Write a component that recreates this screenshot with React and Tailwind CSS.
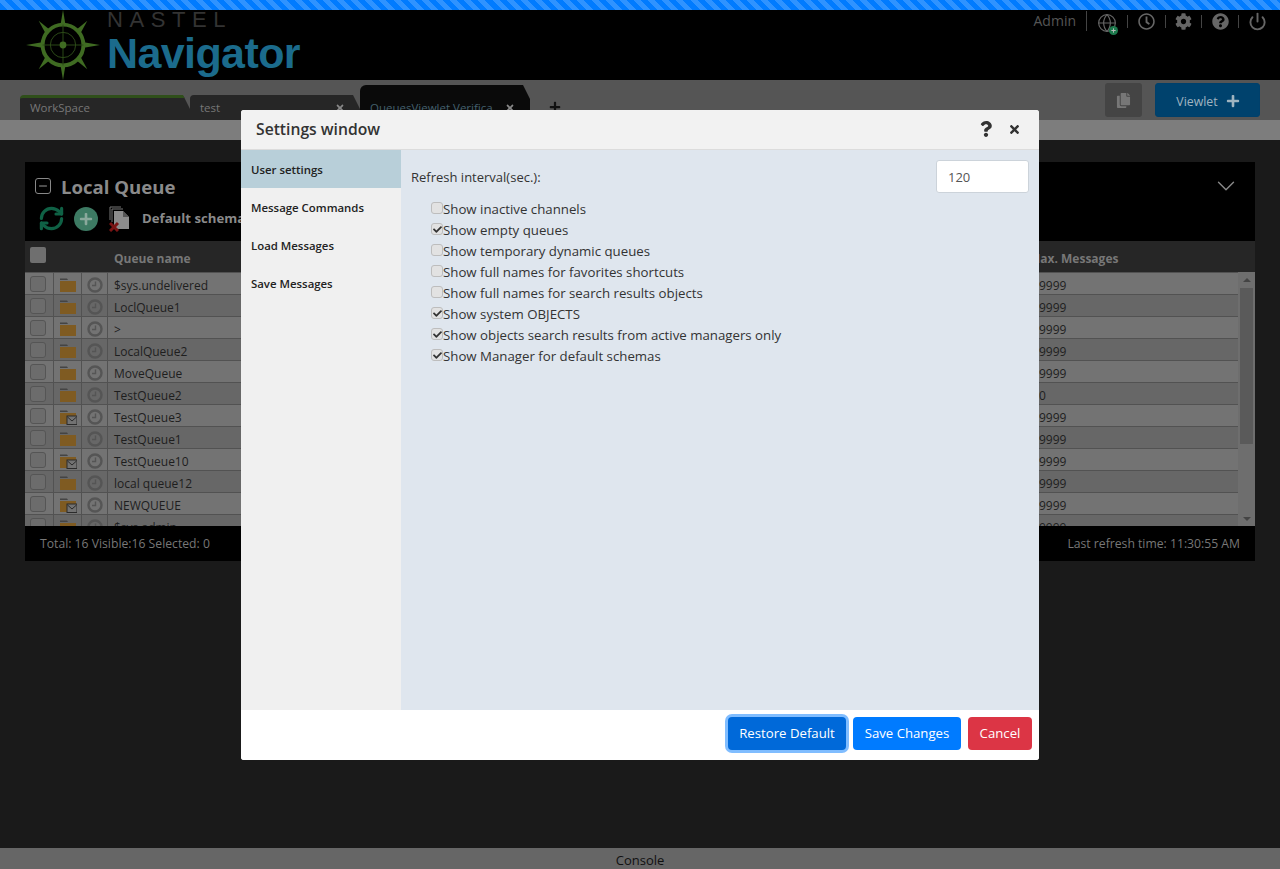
import { Globe, Power, RefreshCw, ChevronDown, Minus } from "lucide-react";
import { FaCheck, FaCog, FaCopy, FaPlus, FaQuestion, FaQuestionCircle, FaRegClock, FaTimes } from "react-icons/fa";

const font = "font-['Open_Sans',sans-serif]";

const queues = [
  ["$sys.undelivered", false, "9999"],
  ["LoclQueue1", false, "9999"],
  [">", false, "9999"],
  ["LocalQueue2", false, "9999"],
  ["MoveQueue", false, "9999"],
  ["TestQueue2", false, "0"],
  ["TestQueue3", true, "9999"],
  ["TestQueue1", false, "9999"],
  ["TestQueue10", true, "9999"],
  ["local queue12", false, "9999"],
  ["NEWQUEUE", true, "9999"],
  ["$sys.admin", false, "9999"],
];

const settings = [
  ["Show inactive channels", false],
  ["Show empty queues", true],
  ["Show temporary dynamic queues", false],
  ["Show full names for favorites shortcuts", false],
  ["Show full names for search results objects", false],
  ["Show system OBJECTS", true],
  ["Show objects search results from active managers only", true],
  ["Show Manager for default schemas", true],
];

const menu = ["User settings", "Message Commands", "Load Messages", "Save Messages"];

function Compass() {
  return (
    <svg width="76" height="70" viewBox="0 0 76 72" className="shrink-0">
      <g fill="#3f6b22">
        <polygon points="38,0 42,24 38,36 34,24" />
        <polygon points="38,72 42,48 38,36 34,48" />
        <polygon points="0,36 24,32 38,36 24,40" />
        <polygon points="76,36 52,32 38,36 52,40" />
        <polygon points="13,11 24,20 20,24" />
        <polygon points="63,11 52,20 56,24" />
        <polygon points="13,61 24,52 20,48" />
        <polygon points="63,61 52,52 56,48" />
      </g>
      <circle cx="38" cy="36" r="21" fill="#000" stroke="#3f6b22" strokeWidth="4" />
      <circle cx="38" cy="36" r="13" fill="none" stroke="#2c4a18" strokeWidth="1" />
      <path d="M38 15V57M17 36H59" stroke="#2c4a18" strokeWidth="1" />
      <circle cx="38" cy="36" r="3.5" fill="#3f6b22" />
    </svg>
  );
}

function Folder({ mail }) {
  return (
    <svg width="18" height="16" viewBox="0 0 18 16">
      <path d="M1 1.5H8L9 3H1Z" fill="#444" />
      <path d="M1 4H17V15H1Z" fill="#7f5b22" />
      {mail && (
        <g>
          <rect x="8" y="7" width="10" height="8.5" fill="#727272" stroke="#2b2b2b" />
          <path d="M8.5 8L13 12L17.5 8" fill="none" stroke="#2b2b2b" />
        </g>
      )}
    </svg>
  );
}

function DeleteDocs() {
  return (
    <svg width="21" height="26" viewBox="0 0 21 26">
      <path d="M1 14V1H12" fill="none" stroke="#777" />
      <path d="M3 16V3H14" fill="none" stroke="#777" />
      <path d="M5 5H14L20 11V23H5Z" fill="#8c8c8c" />
      <path d="M14 5V11H20" fill="#555" />
      <path d="M1 17L9 25M9 17L1 25" stroke="#7a1414" strokeWidth="3" />
    </svg>
  );
}

function RowClock() {
  return (
    <svg width="16" height="16" viewBox="0 0 16 16">
      <circle cx="8" cy="8" r="6.5" fill="none" stroke="#555" strokeWidth="2.4" />
      <path d="M8.5 4.5V8.5H5" fill="none" stroke="#555" strokeWidth="1.4" />
    </svg>
  );
}

function Box() {
  return <span className="block h-4 w-4 rounded-[3px] border border-[#555] bg-[#6c6c6c]" />;
}

function QueueRow({ row, index }) {
  return (
    <div className={`flex h-[22px] shrink-0 items-center border-b border-[#525252] text-xs text-[#1e1e1e] ${index % 2 ? "bg-[#676767]" : "bg-[#737373]"}`}>
      <div className="flex h-full w-[29px] items-center justify-center border-r border-[#525252] pr-[2px]"><Box /></div>
      <div className="flex h-full w-[28px] items-center justify-center border-r border-[#525252] pt-[2px]"><Folder mail={row[1]} /></div>
      <div className="flex h-full w-[26px] items-center justify-center border-r border-[#525252] pt-[3px]">
        <RowClock />
      </div>
      <div className="w-[920px] pt-[4px] pl-[6px]">{row[0]}</div>
      <div className="flex-1 pt-[4px] pl-[11px]">{row[2]}</div>
    </div>
  );
}

function Tab({ label, green, active }) {
  return (
    <div className={`relative flex w-[170px] items-center justify-between pr-[15px] pl-[10px] text-[11.5px] [clip-path:polygon(0_0,calc(100%-7px)_0,100%_14px,100%_100%,0_100%)] ${active ? "h-[35px] rounded-t-md bg-[#0a0a0a] pt-[10px] text-[#44606e]" : "h-[25px] rounded-t-sm bg-[#262626] text-[#777]"} ${green ? "border-t-[3px] border-[#2f4f1a] pb-[2px]" : ""}`}>
      <span>{label}</span>
      {!green && <FaTimes className="text-[10px] text-[#888]" />}
    </div>
  );
}

function SettingRow({ label, checked }) {
  return (
    <label className="flex h-[21px] items-center">
      <span className="-mt-[3px] flex h-[12px] w-[12px] items-center justify-center rounded-[3px] border border-[#bdbdbd] bg-[#e2e2e2]">
        {checked && <FaCheck className="text-[9px] text-[#333]" />}
      </span>
      <span>{label}</span>
    </label>
  );
}

export default function App() {
  return (
    <div className={`relative flex h-[869px] flex-col overflow-hidden bg-[#1a1a1a] ${font}`}>
      <div className="h-[10px] shrink-0 bg-[repeating-linear-gradient(45deg,#007bff_0,#007bff_5px,#2f93ff_5px,#2f93ff_10px)]" />

      <header className="flex h-[70px] shrink-0 items-start justify-between overflow-hidden bg-black">
        <div className="flex pl-[25px]">
          <Compass />
          <div className="relative ml-[6px] w-[200px] font-['Liberation_Sans',sans-serif]">
            <div className="h-[19px] text-[22px] leading-[19px] tracking-[6.6px] whitespace-nowrap text-[#333]">NASTEL</div>
            <div className="text-[43px] leading-[48px] font-bold tracking-[-0.6px] text-[#1b6b8c]">Navigator</div>
          </div>
        </div>
        <div className="flex h-[22px] items-center pr-[13px] text-sm text-[#555]">
          <span className="border-r border-[#444] pr-[10px]">Admin</span>
          <span className="relative mt-[3px] ml-[10px]">
            <Globe size={20} strokeWidth={1.4} className="text-[#666]" />
            <span className="absolute -right-[1px] -bottom-[2px] flex h-[9px] w-[9px] items-center justify-center rounded-full bg-[#1d7a4d]">
              <FaPlus className="text-[5px] text-[#bbb]" />
            </span>
          </span>
          <span className="ml-[10px] h-[13px] border-l border-[#444]" />
          <FaRegClock className="ml-[10px] text-[17px] text-[#666]" />
          <span className="ml-[10px] h-[13px] border-l border-[#444]" />
          <FaCog className="ml-[9px] text-[17px] text-[#666]" />
          <span className="ml-[9px] h-[13px] border-l border-[#444]" />
          <FaQuestionCircle className="ml-[10px] text-[17px] text-[#666]" />
          <span className="ml-[9px] h-[13px] border-l border-[#444]" />
          <Power size={19} strokeWidth={2.4} className="ml-[9px] text-[#666]" />
        </div>
      </header>

      <div className="flex h-[40px] shrink-0 items-end justify-between bg-[#555] pr-[20px] pl-[20px]">
        <div className="flex items-end">
          <Tab label="WorkSpace" green />
          <Tab label="test" />
          <Tab label="QueuesViewlet Verifica" active />
          <FaPlus className="mb-[7px] ml-[19px] text-[12px] text-[#111]" />
        </div>
        <div className="mb-[3px] flex items-center gap-[13px]">
          <div className="flex h-[34px] w-[37px] items-center justify-center rounded-[3px] bg-[#444]">
            <FaCopy className="text-[15px] text-[#777]" />
          </div>
          <div className="flex h-[34px] w-[105px] items-center justify-center gap-[8px] rounded-[3px] border border-[#00406b] bg-[#00426d] pt-[4px] pl-px text-[12.3px] text-[#a0b4c0]">
            Viewlet <FaPlus className="-mt-[3px] text-[14px] text-[#a0b4c0]" />
          </div>
        </div>
      </div>
      <div className="h-[20px] shrink-0 bg-[#7d7d7d]" />

      <main className="flex flex-1 flex-col px-[25px] pt-[22px]">
        <section className="flex h-[399px] flex-col">
          <div className="h-[79px] shrink-0 bg-black pt-[13px] pl-[10px]">
            <div className="flex items-center justify-between pr-[14px]">
              <div className="flex items-center gap-[10px]">
                <span className="-mt-[3px] flex h-4 w-4 items-center justify-center rounded-[3px] border border-[#888]">
                  <Minus size={12} className="text-[#999]" />
                </span>
                <span className="text-[18.6px] leading-[24px] font-bold text-[#8a8a8a]">Local Queue</span>
              </div>
              <ChevronDown size={30} strokeWidth={1.1} className="-my-[6px] -mt-[9px] text-[#8a8a8a]" />
            </div>
            <div className="mt-[6px] flex items-center">
              <RefreshCw size={27} strokeWidth={2.8} className="ml-[3px] text-[#0f6145]" />
              <span className="ml-[9px] flex h-[24px] w-[24px] items-center justify-center rounded-full bg-[#3d7a63]">
                <FaPlus className="text-[14px] text-[#8aa99c]" />
              </span>
              <span className="ml-[11px]"><DeleteDocs /></span>
              <span className="ml-[12px] text-[13.2px] font-bold text-[#8a8a8a]">Default schema</span>
            </div>
          </div>
          <div className="flex h-[31px] shrink-0 bg-[#262626] pt-[9px] text-xs leading-[18px] font-bold text-[#777]">
            <span className="-mt-[3px] ml-[5px] block h-4 w-4 rounded-[2px] bg-[#6f6f6f]" />
            <span className="ml-[68px] w-[916px]">Queue name</span>
            <span className="ml-[-1px]">Max. Messages</span>
          </div>
          <div className="flex min-h-0 flex-1 overflow-hidden">
            <div className="flex flex-1 flex-col overflow-hidden border-t border-[#525252]">
              {queues.map((row, i) => (
                <QueueRow key={i} row={row} index={i} />
              ))}
            </div>
            <div className="flex w-[17px] flex-col items-center bg-[#6e6e6e] px-[2px] pt-[6px]">
              <span className="h-0 w-0 border-x-[4px] border-b-[4px] border-x-transparent border-b-[#444]" />
              <span className="mt-[6px] h-[156px] w-full bg-[#5a5a5a]" />
              <span className="mt-auto mb-[5px] h-0 w-0 border-x-[4px] border-t-[4px] border-x-transparent border-t-[#444]" />
            </div>
          </div>
          <div className="flex h-[35px] shrink-0 items-center justify-between bg-black px-[15px] pt-[2px] text-[12.2px] text-[#777]">
            <span>Total: 16 Visible:16 Selected: 0</span>
            <span>Last refresh time: 11:30:55 AM</span>
          </div>
        </section>
      </main>

      <footer className="flex h-[21px] shrink-0 items-center justify-center bg-[#666] pt-[4px] text-[13px] text-[#111]">Console</footer>

      <div className="absolute inset-x-0 top-[10px] bottom-0">
        <div className="mx-auto mt-[100px] flex h-[650px] w-[798px] flex-col overflow-hidden rounded-[3px] bg-white">
          <div className="flex h-[40px] shrink-0 items-center justify-between border-b border-[#dcdcdc] bg-[#f2f2f2] pr-[18px] pl-[15px]">
            <span className="text-[15.7px] font-semibold text-[#333]">Settings window</span>
            <div className="flex items-center gap-[14px] text-[#333]">
              <FaQuestion className="-mt-[2px] text-[16px]" />
              <FaTimes className="text-[13px]" />
            </div>
          </div>
          <div className="flex min-h-0 flex-1">
            <aside className="w-[160px] shrink-0 bg-[#f0f0f0]">
              {menu.map((item, i) => (
                <div key={item} className={`flex h-[38px] items-center pt-[2px] pl-[10px] text-[11.4px] font-semibold text-[#222] ${i === 0 ? "bg-[#b8cfd9]" : ""}`}>
                  {item}
                </div>
              ))}
            </aside>
            <div className="flex-1 bg-[#dfe6ee] px-[10px] pt-[10px] text-[13.25px] text-[#333]">
              <div className="flex items-center justify-between">
                <span className="pt-[2px] text-[13px]">Refresh interval(sec.):</span>
                <input defaultValue="120" className="h-[33px] w-[93px] rounded-[3px] border border-[#ccd3da] bg-white px-[11px] text-[13px] text-[#555] outline-none" />
              </div>
              <div className="mt-[6px] ml-[20px]">
                {settings.map(([label, checked]) => (
                  <SettingRow key={label} label={label} checked={checked} />
                ))}
              </div>
            </div>
          </div>
          <div className="flex h-[50px] shrink-0 items-start justify-end gap-[6px] bg-white pt-[7px] pr-[7px] text-[13.2px] text-white">
            <button className="h-[33px] w-[118px] rounded-[4px] bg-[#0069d9] pt-px ring-[3px] ring-[#80bdff]">Restore Default</button>
            <button className="ml-px h-[33px] w-[108px] rounded-[4px] bg-[#007bff] pt-px">Save Changes</button>
            <button className="ml-px h-[33px] w-[64px] rounded-[4px] bg-[#dc3545] pt-px">Cancel</button>
          </div>
        </div>
      </div>
    </div>
  );
}
